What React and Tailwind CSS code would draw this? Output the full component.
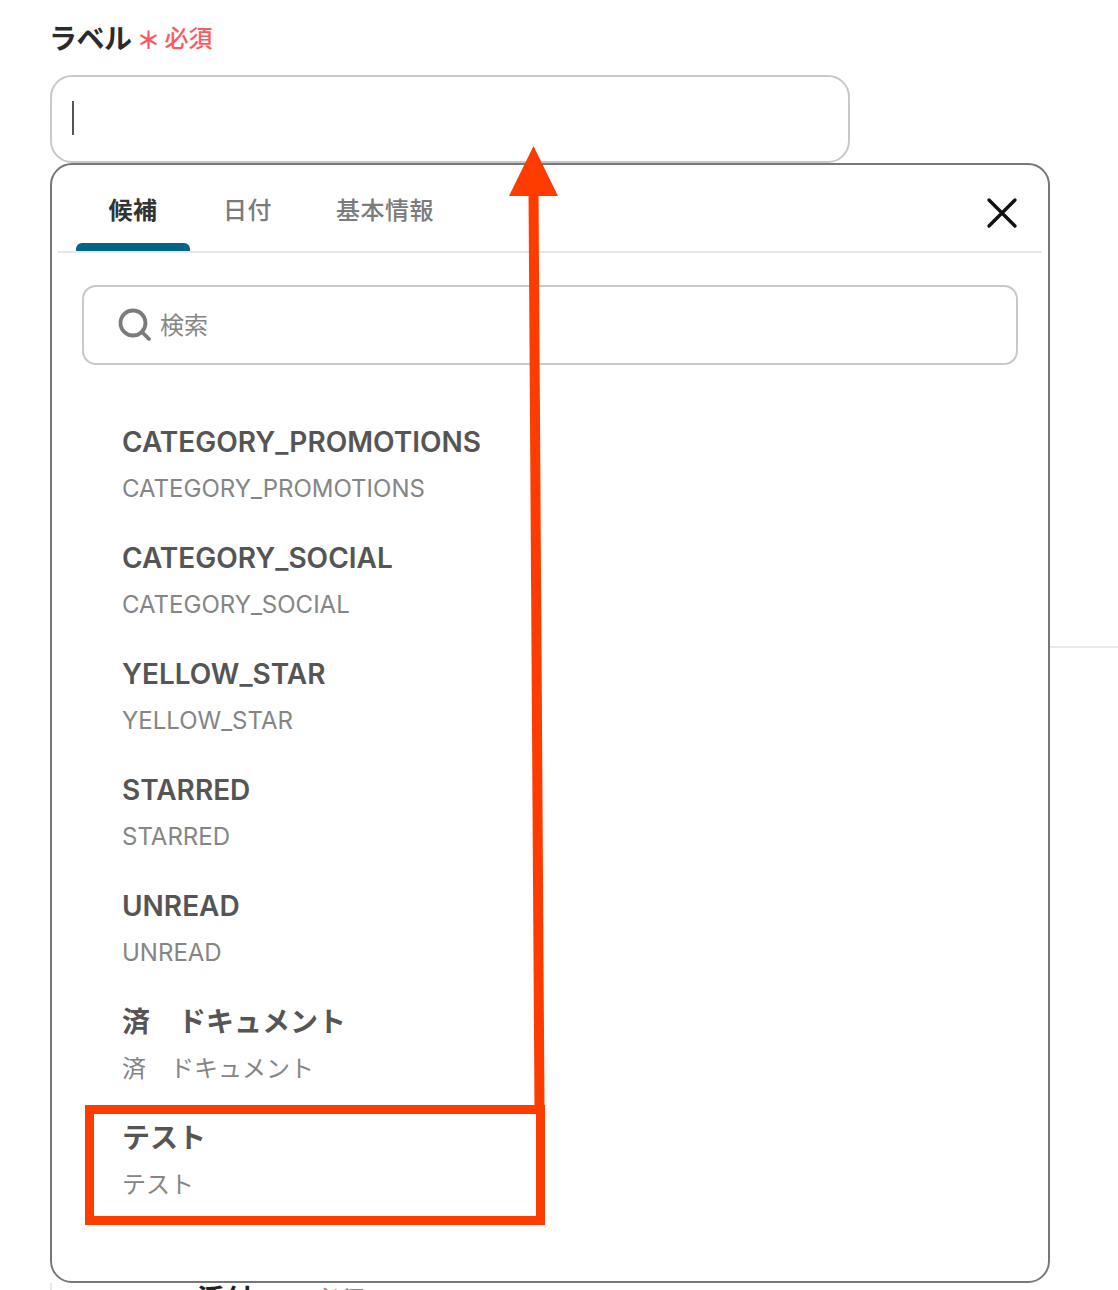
const items = [
  "CATEGORY_PROMOTIONS",
  "CATEGORY_SOCIAL",
  "YELLOW_STAR",
  "STARRED",
  "UNREAD",
  "済　ドキュメント",
  "テスト",
];

const font = { fontFamily: '"Inter", "Noto Sans CJK JP", sans-serif' };

export default function App() {
  return (
    <div style={font} className="relative w-[1118px] h-[1290px] overflow-hidden bg-white pl-[50px] pt-[20px]">
      <div className="flex items-center h-[36px]">
        <span className="-ml-[1px] mt-[1px] text-[28px] leading-[36px] font-semibold text-[#2b2b2b] tracking-[-0.5px]">ラベル</span>
        <span className="ml-[5px] mt-[5px] text-[24px] leading-[36px] font-bold text-[#fb5a62]">＊</span>
        <span className="ml-[4px] mt-[1px] text-[24px] leading-[36px] font-medium text-[#fb5a62]">必須</span>
      </div>
      <div className="mt-[19px] w-[800px] h-[88px] rounded-[22px] border-2 border-[#c8c8cc] bg-white pl-[20px] pt-[24px]">
        <div className="w-[2px] h-[34px] bg-[#555]"></div>
      </div>
      <div className="w-[1000px] h-[1120px] rounded-[22px] border-2 border-[#77777a] bg-white px-[6px]">
        <div className="relative flex h-[88px] border-b-2 border-[#e8e8e8]">
          <div className="relative w-[114px] ml-[18px] pt-[28px] text-center text-[24px] leading-[36px] font-semibold tracking-[0.5px] text-[#333]">
            候補
            <div className="absolute left-0 right-0 bottom-0 h-[8px] rounded-t-[6px] bg-[#04658a]"></div>
          </div>
          <div className="ml-[33px] pt-[28px] text-[24px] leading-[36px] font-medium tracking-[0.5px] text-[#7b7b7b]">日付</div>
          <div className="ml-[64px] pt-[28px] text-[24px] leading-[36px] font-medium tracking-[0.5px] text-[#7b7b7b]">基本情報</div>
          <svg className="absolute left-[928px] top-[32px]" width="32" height="32" viewBox="0 0 32 32">
            <path d="M3 3 L29 29 M29 3 L3 29" stroke="#111" strokeWidth="3.4" strokeLinecap="round" />
          </svg>
        </div>
        <div className="mt-[32px] ml-[24px] w-[936px] h-[80px] rounded-[14px] border-2 border-[#c8c8cc] flex items-center pl-[34px]">
          <svg width="34" height="34" viewBox="0 0 34 34" fill="none" stroke="#7b7b7b" strokeWidth="3.8">
            <circle cx="15" cy="15" r="12.5" />
            <path d="M24 24 L31 31" strokeLinecap="round" />
          </svg>
          <span className="ml-[8px] mt-[2px] text-[24px] leading-[36px] text-[#858585]">検索</span>
        </div>
        <div className="mt-[53px] ml-[64px] flex flex-col">
          {items.map((t) => (
            <div key={t} className="h-[116px]">
              <div className="h-[48px] text-[28px] leading-[48px] font-semibold text-[#555]">{t}</div>
              <div className="h-[46px] text-[24px] leading-[46px] text-[#858585]">{t}</div>
            </div>
          ))}
        </div>
      </div>
      <div className="absolute left-[50px] top-[1283px] bottom-0 w-[2px] bg-[#e8e8e8]"></div>
      <div className="absolute left-[197px] top-[1280px] text-[28px] leading-[40px] font-semibold text-[#222]">添付</div>
      <div className="absolute left-[316px] top-[1280px] text-[24px] leading-[40px] text-[#888]">必須</div>
      <svg className="absolute left-0 top-0 pointer-events-none" width="1118" height="1290" viewBox="0 0 1118 1290">
        <path d="M533.5 190 L539.5 1110" stroke="#ff3c00" strokeWidth="10" fill="none" />
        <polygon points="533.5,146 509,196 558,196" fill="#ff3c00" />
      </svg>
      <div className="absolute left-[85px] top-[1105px] w-[460px] h-[120px] border-[9px] border-[#ff3c00]"></div>
      <div className="absolute left-[1050px] top-[646px] w-[68px] h-[2px] bg-[#e8e8e8]"></div>
    </div>
  );
}
